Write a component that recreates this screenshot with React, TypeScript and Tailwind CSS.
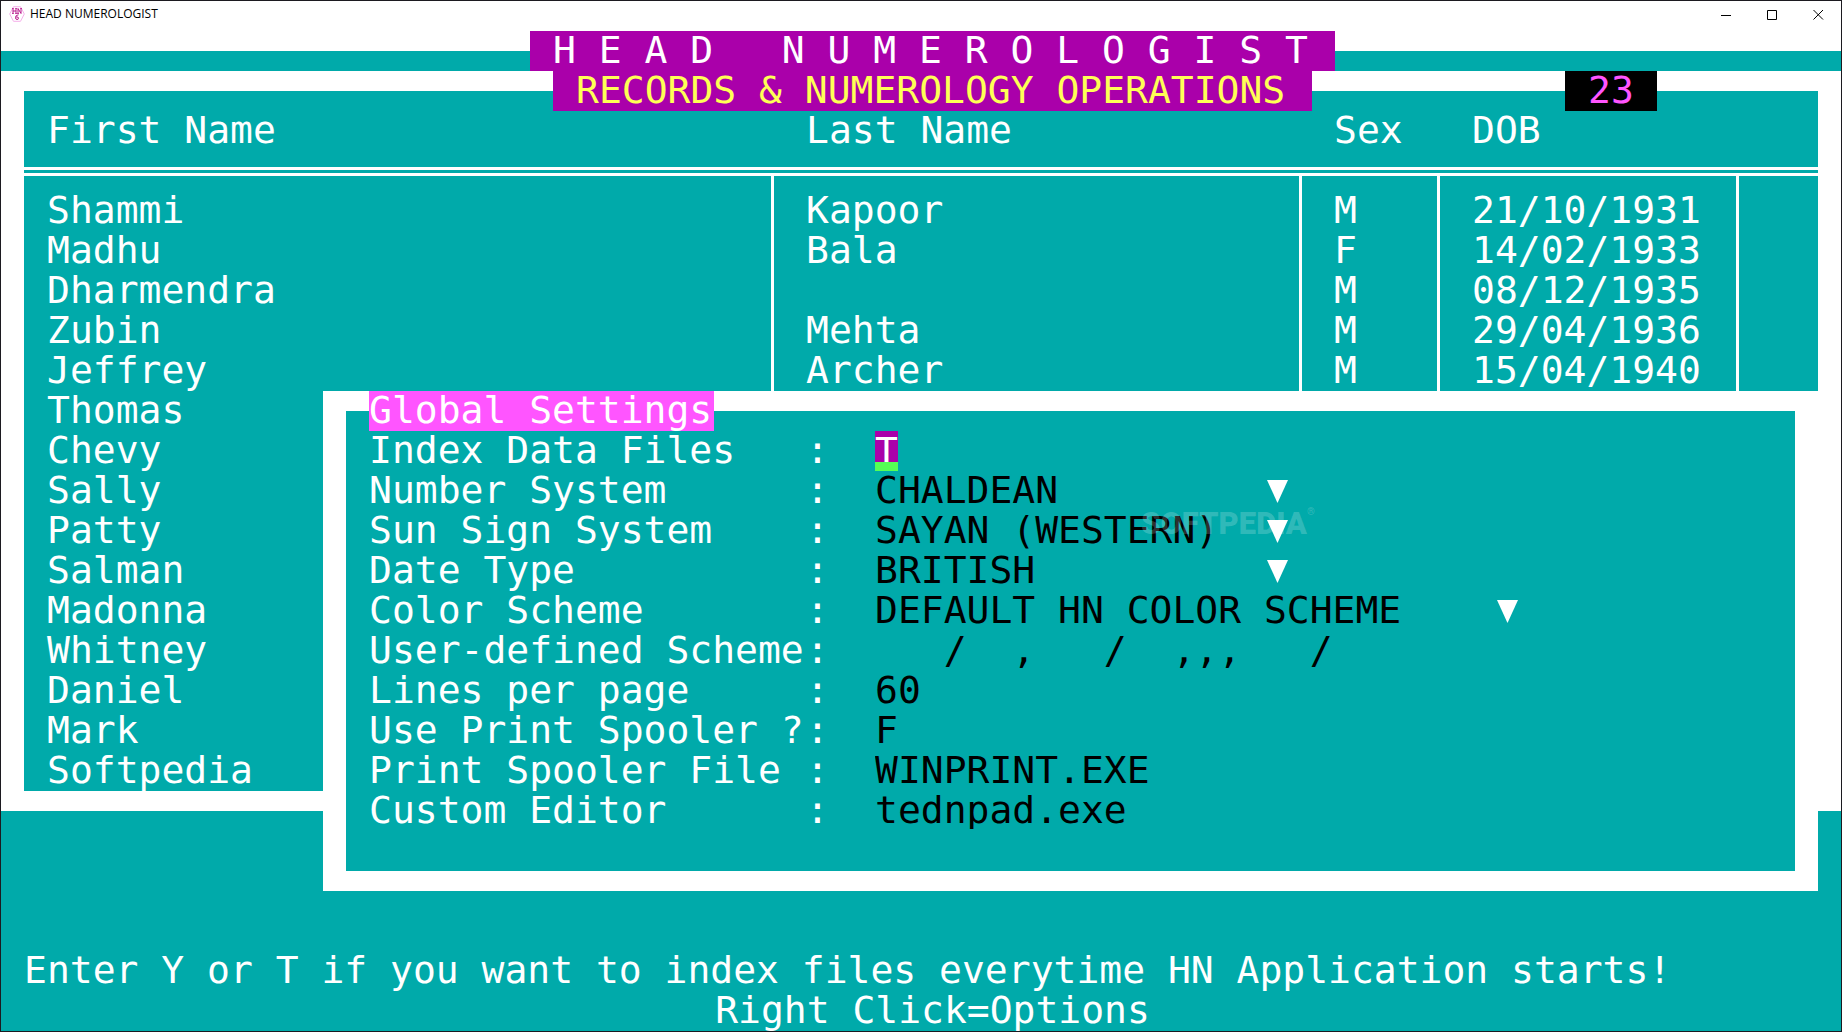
import { useState } from "react";

const records = [
  { first: "Shammi", last: "Kapoor", sex: "M", dob: "21/10/1931" },
  { first: "Madhu", last: "Bala", sex: "F", dob: "14/02/1933" },
  { first: "Dharmendra", last: "", sex: "M", dob: "08/12/1935" },
  { first: "Zubin", last: "Mehta", sex: "M", dob: "29/04/1936" },
  { first: "Jeffrey", last: "Archer", sex: "M", dob: "15/04/1940" },
  { first: "Thomas", last: "", sex: "", dob: "" },
  { first: "Chevy", last: "", sex: "", dob: "" },
  { first: "Sally", last: "", sex: "", dob: "" },
  { first: "Patty", last: "", sex: "", dob: "" },
  { first: "Salman", last: "", sex: "", dob: "" },
  { first: "Madonna", last: "", sex: "", dob: "" },
  { first: "Whitney", last: "", sex: "", dob: "" },
  { first: "Daniel", last: "", sex: "", dob: "" },
  { first: "Mark", last: "", sex: "", dob: "" },
  { first: "Softpedia", last: "", sex: "", dob: "" },
];

const settings = [
  { id: "index", label: "Index Data Files", value: "T", kind: "flag" },
  { id: "number", label: "Number System", value: "CHALDEAN", kind: "select" },
  { id: "sun", label: "Sun Sign System", value: "SAYAN (WESTERN)", kind: "select" },
  { id: "date", label: "Date Type", value: "BRITISH", kind: "select" },
  { id: "color", label: "Color Scheme", value: "DEFAULT HN COLOR SCHEME", kind: "wide" },
  { id: "user", label: "User-defined Scheme", value: "   /  ,   /  ,,,   /", kind: "text" },
  { id: "lines", label: "Lines per page", value: "60", kind: "text" },
  { id: "spool", label: "Use Print Spooler ?", value: "F", kind: "text" },
  { id: "file", label: "Print Spooler File", value: "WINPRINT.EXE", kind: "text" },
  { id: "editor", label: "Custom Editor", value: "tednpad.exe", kind: "text" },
];

function TitleBar() {
  return (
    <header className="flex h-[30px] items-center bg-white pb-1 text-black">
      <svg viewBox="0 0 16 16" className="ml-2 h-4 w-4">
        <path d="M4.500 .7h7L15.300 8l-3.800 7.300h-7L.7 8z" fill="#fff" stroke="#f5b0ea" />
        <path
          d="M4 2.500v5M7 2.500v5M4 5h3M9 7.500V2.500l3 5V2.500M3.200 2.500h1.500M6.300 2.500h1.500M3.200 7.500h1.500M6.300 7.500h1.500M11.300 2.500h1.500M8.300 7.500h1.500M9.500 8.800Q6.500 9 6.500 11.500Q6.500 13.500 8 13.500T9.500 12.200T8 11H6.700"
          fill="none"
          stroke="#b8188c"
        />
      </svg>
      <h1 className="ml-[5px] flex-1 font-['Open_Sans',sans-serif] text-[12px]">HEAD NUMEROLOGIST</h1>
      <button aria-label="Minimize" className="flex h-full w-[46px] items-center justify-center">
        <svg viewBox="0 0 11 11" className="h-[11px] w-[11px]" stroke="#000" fill="none">
          <path d="M0 6.500h10" />
        </svg>
      </button>
      <button aria-label="Maximize" className="flex h-full w-[46px] items-center justify-center">
        <svg viewBox="0 0 11 11" className="h-[11px] w-[11px]" stroke="#000" fill="none">
          <path d="M.5 1.500h9v9h-9z" />
        </svg>
      </button>
      <button aria-label="Close" className="flex h-full w-[46px] items-center justify-center">
        <svg viewBox="0 0 11 11" className="h-[11px] w-[11px]" stroke="#000" fill="none">
          <path d="M.5 1l9.500 9.500M10 1l-9.500 9.500" />
        </svg>
      </button>
    </header>
  );
}

function RecordTable() {
  return (
    <table className="w-full table-fixed border-separate border-spacing-0 text-left">
      <colgroup>
        <col className="w-[750px]" />
        <col className="w-[528px]" />
        <col className="w-[138px]" />
        <col className="w-[299px]" />
        <col />
      </colgroup>
      <thead>
        <tr className="h-[76px] align-top">
          <th className="p-0 pt-5 pl-[23px] font-normal">First Name</th>
          <th className="p-0 pt-5 pl-8 font-normal">Last Name</th>
          <th className="p-0 pt-5 pl-8 font-normal">Sex</th>
          <th className="p-0 pt-5 pl-8 font-normal">DOB</th>
          <th />
        </tr>
        <tr className="h-[9px]">
          <td colSpan={5} className="border-y-3 border-white p-0" />
        </tr>
      </thead>
      <tbody>
        <tr className="h-[15px]">
          <td className="border-r-3 border-white p-0" />
          <td className="border-r-3 border-white p-0" />
          <td className="border-r-3 border-white p-0" />
          <td className="border-r-3 border-white p-0" />
          <td className="p-0" />
        </tr>
        {records.map((row) => (
          <tr key={row.first} className="h-10 align-top">
            <td className="border-r-3 border-white p-0 pl-[23px]">{row.first}</td>
            <td className="border-r-3 border-white p-0 pl-8">{row.last}</td>
            <td className="border-r-3 border-white p-0 pl-8">{row.sex}</td>
            <td className="border-r-3 border-white p-0 pl-8">{row.dob}</td>
            <td className="p-0" />
          </tr>
        ))}
      </tbody>
    </table>
  );
}

function Arrow() {
  return (
    <svg viewBox="0 0 21 23" className="pointer-events-none mt-[9px] -ml-[22px] h-[23px] w-[21px] fill-white">
      <path d="M0 0h21L10.500 23z" />
    </svg>
  );
}

function SettingsDialog() {
  const [values, setValues] = useState<Record<string, string>>(
    Object.fromEntries(settings.map((item) => [item.id, item.value])),
  );

  const change = (id: string, value: string) => {
    setValues({ ...values, [id]: value });
  };

  return (
    <form className="absolute top-[360px] right-[23px] left-[322px] border-x-[23px] border-y-20 border-white bg-[#00aaaa] pb-10 pl-[23px]">
      <h2 className="-mt-5 w-[345px] bg-[#ff55ff] pb-0.5">Global Settings</h2>
      {settings.map((item) => (
        <div key={item.id} className="flex h-10 items-start">
          <label htmlFor={item.id} className="w-[437px]">
            {item.label}
          </label>
          <span className="w-[69px]">:</span>
          {item.kind === "flag" && (
            <input
              id={item.id}
              value={values[item.id]}
              maxLength={1}
              onChange={(event) => change(item.id, event.target.value)}
              className="h-10 w-[23px] border-b-9 border-[#55ff55] bg-[#aa00aa] pt-2 outline-none"
            />
          )}
          {(item.kind === "select" || item.kind === "wide") && (
            <>
              <select
                id={item.id}
                className={
                  item.kind === "wide"
                    ? "h-[38px] w-[644px] appearance-none text-black outline-none"
                    : "h-[38px] w-[414px] appearance-none text-black outline-none"
                }
              >
                <option>{item.value}</option>
              </select>
              <Arrow />
            </>
          )}
          {item.kind === "text" && (
            <input
              id={item.id}
              value={values[item.id]}
              onChange={(event) => change(item.id, event.target.value)}
              className="h-[38px] min-w-0 flex-1 text-black outline-none"
            />
          )}
        </div>
      ))}
      <div className="pointer-events-none absolute top-[94px] left-[795px] flex items-start font-[Roboto,sans-serif] text-[31px] font-black text-white/20">
        SOFTPEDIA<span className="text-[10px] leading-[14px] font-bold">®</span>
      </div>
    </form>
  );
}

export default function App() {
  return (
    <div className="flex min-h-screen flex-col border border-[#1c1a20] bg-[#00aaaa]">
      <TitleBar />
      <main className="relative flex flex-1 flex-col font-['DejaVu_Sans_Mono',monospace] text-[38px] leading-[38px] whitespace-pre text-white">
        <div className="h-5 bg-white" />
        <section className="mt-5 border-x-[23px] border-y-20 border-white">
          <RecordTable />
        </section>
        <div className="absolute inset-x-0 top-0 flex flex-col items-center pl-[23px]">
          <p className="w-[805px] bg-[#aa00aa] pb-0.5 pl-[23px]">H E A D   N U M E R O L O G I S T</p>
          <p className="w-[759px] bg-[#aa00aa] pb-0.5 pl-[23px] text-[#ffff55]">RECORDS &amp; NUMEROLOGY OPERATIONS</p>
        </div>
        <div className="absolute top-10 right-[184px] w-[92px] bg-black pb-0.5 text-center text-[#ff55ff]">23</div>
        <SettingsDialog />
        <footer className="mt-auto">
          <p className="pb-0.5 pl-[23px]">Enter Y or T if you want to index files everytime HN Application starts!</p>
          <p className="pb-0.5 pl-[23px] text-center">Right Click=Options</p>
        </footer>
      </main>
    </div>
  );
}
